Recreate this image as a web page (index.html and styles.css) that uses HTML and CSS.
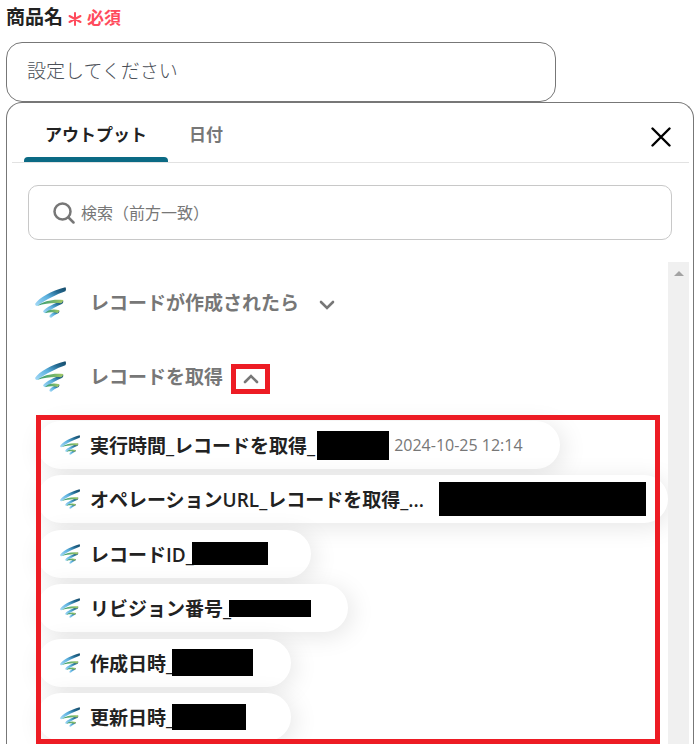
FILE: index.html
```html
<!DOCTYPE html>
<html lang="ja">
<head>
  <meta charset="UTF-8">
  <meta name="viewport" content="width=device-width, initial-scale=1.0">
  <title>商品名</title>
  <link rel="stylesheet" href="styles.css">
</head>
<body>
  <svg class="sprite" width="0" height="0" aria-hidden="true">
    <defs>
      <linearGradient id="blade" x1="0" y1="1" x2="1" y2="0">
        <stop offset="0" stop-color="#a8dcf8"></stop>
        <stop offset="0.45" stop-color="#5bb0de"></stop>
        <stop offset="0.75" stop-color="#22688f"></stop>
        <stop offset="1" stop-color="#174a68"></stop>
      </linearGradient>
      <linearGradient id="leaf" x1="0" y1="0" x2="1" y2="0">
        <stop offset="0" stop-color="#2f9a76"></stop>
        <stop offset="0.6" stop-color="#6fb36a"></stop>
        <stop offset="1" stop-color="#a5c969"></stop>
      </linearGradient>
    </defs>
    <symbol id="logo" viewBox="0 0 93 93">
      <path fill="url(#blade)" d="M24 73C34 60 58 50 84 40Q87 45 82 50C64 58 48 67 33 78Q26 80 24 73Z"></path>
      <path fill="url(#blade)" d="M43 87C48 79 60 73 72 70Q75 74 71 78C63 81 56 87 49 92Q43 93 43 87Z"></path>
      <path fill="url(#blade)" d="M0 51C12 33 48 12 91 1Q95 6 91 13C66 22 34 37 9 56Q2 59 0 51Z"></path>
      <path fill="url(#leaf)" d="M8 56C24 42 56 35 85 39Q84 45 79 49C56 46 30 50 8 56Z"></path>
      <path fill="url(#leaf)" d="M30 78C40 67 58 65 73 70Q72 75 68 78C56 75 44 75 30 78Z"></path>
    </symbol>
  </svg>

  <div class="field">
    <label class="field-label" for="product-name">商品名
      <svg class="required-mark" viewBox="0 0 14 14" aria-hidden="true"><path d="M7 1V13M1.5 4L12.5 10M12.5 4L1.5 10"></path></svg>
      <span class="required">必須</span>
    </label>
    <input class="field-input" id="product-name" type="text" placeholder="設定してください">
  </div>

  <div class="picker">
    <div class="tabs">
      <button class="tab active" type="button">アウトプット</button>
      <button class="tab" type="button">日付</button>
      <button class="close" type="button" aria-label="閉じる">
        <svg viewBox="0 0 20 20"><path d="M1.5 1.5L18.5 18.5M18.5 1.5L1.5 18.5"></path></svg>
      </button>
    </div>

    <div class="search">
      <svg viewBox="0 0 22 22" aria-hidden="true"><circle cx="9.5" cy="9.5" r="8"></circle><path d="M15.5 15.5L20.5 20.5"></path></svg>
      <input type="search" aria-label="検索" placeholder="検索（前方一致）">
    </div>

    <div class="results">
      <div class="groups">
        <button class="group" type="button">
          <svg class="group-logo"><use href="#logo"></use></svg>
          <span>レコードが作成されたら</span>
          <span class="toggle"><svg class="chevron" viewBox="0 0 16 10"><path d="M2 2L8 8L14 2"></path></svg></span>
        </button>
        <button class="group open" type="button">
          <svg class="group-logo"><use href="#logo"></use></svg>
          <span>レコードを取得</span>
          <span class="toggle marked"><svg class="chevron" viewBox="0 0 16 10"><path d="M2 8L8 2L14 8"></path></svg></span>
        </button>

        <div class="outputs">
          <button class="pill" type="button">
            <svg class="pill-logo"><use href="#logo"></use></svg>
            <span>実行時間_レコードを取得_</span>
            <span class="mask mask-time"></span>
            <span class="value">2024-10-25 12:14</span>
          </button>
          <button class="pill pill-wide" type="button">
            <svg class="pill-logo"><use href="#logo"></use></svg>
            <span class="name">オペレーションURL_レコードを取得_...</span>
            <span class="mask mask-url"></span>
          </button>
          <button class="pill" type="button">
            <svg class="pill-logo"><use href="#logo"></use></svg>
            <span>レコードID_</span>
            <span class="slot"><span class="mask mask-id"></span></span>
          </button>
          <button class="pill" type="button">
            <svg class="pill-logo"><use href="#logo"></use></svg>
            <span>リビジョン番号_</span>
            <span class="slot"><span class="mask mask-revision"></span></span>
          </button>
          <button class="pill" type="button">
            <svg class="pill-logo"><use href="#logo"></use></svg>
            <span>作成日時_</span>
            <span class="slot"><span class="mask mask-created"></span></span>
          </button>
          <button class="pill" type="button">
            <svg class="pill-logo"><use href="#logo"></use></svg>
            <span>更新日時_</span>
            <span class="slot"><span class="mask mask-updated"></span></span>
          </button>
          <div class="frame"></div>
        </div>
      </div>
      <div class="scrollbar"></div>
    </div>
  </div>
</body>
</html>
```

FILE: styles.css
```css
* {
  box-sizing: border-box;
}
body {
  display: flex;
  flex-direction: column;
  min-height: 100vh;
  margin: 0;
  padding: 4px 6px 0;
  background: #fff;
  color: #222;
  font-family: "Open Sans", "Noto Sans CJK JP", sans-serif;
  font-size: 19px;
}
button, input {
  font: inherit;
  color: inherit;
}
button {
  padding: 0;
  border: none;
  background: none;
  cursor: pointer;
}
svg {
  flex: none;
  fill: none;
  stroke-linecap: round;
}
.sprite {
  position: absolute;
}

/* Field */
.field-label {
  display: flex;
  align-items: center;
  gap: 5px;
  height: 24px;
  margin-bottom: 14px;
  font-weight: 700;
}
.required-mark {
  width: 14px;
  height: 14px;
  margin-top: 6px;
  stroke: #ff4b5c;
  stroke-width: 2;
}
.required {
  color: #ff4b5c;
  font-size: 17px;
}
.field-input {
  display: block;
  width: 80%;
  height: 60px;
  padding: 0 20px 2px;
  border: 1px solid #777;
  border-radius: 16px;
}
.field-input::placeholder {
  color: #4b5058;
  font-weight: 300;
  opacity: 1;
}

/* Picker */
.picker {
  display: flex;
  flex: 1;
  flex-direction: column;
  padding: 0 4px 0 5px;
  border: 1px solid #777;
  border-bottom: none;
  border-radius: 16px 16px 0 0;
}
.tabs {
  display: flex;
  height: 60px;
  padding: 0 18px 0 12px;
  border-bottom: 1px solid #e2e2e2;
}
.tab {
  position: relative;
  padding: 2px 21px 0;
  color: #777;
  font-size: 17px;
  font-weight: 700;
}
.tab.active {
  color: #222;
}
.tab.active::after {
  content: "";
  position: absolute;
  right: 0;
  bottom: 0;
  left: 0;
  height: 5px;
  border-radius: 4px 4px 0 0;
  background: #0b6a84;
}
.close {
  display: flex;
  align-items: center;
  margin-left: auto;
  padding-top: 8px;
}
.close svg {
  width: 20px;
  height: 20px;
  stroke: #000;
  stroke-width: 2.4;
}
.search {
  display: flex;
  align-items: center;
  gap: 6px;
  height: 55px;
  margin: 22px 17px 22px 16px;
  padding: 0 24px;
  border: 1px solid #c8c8c8;
  border-radius: 10px;
}
.search svg {
  width: 22px;
  height: 22px;
  stroke: #777;
  stroke-width: 2.5;
}
.search input {
  flex: 1;
  min-width: 0;
  padding: 0;
  border: none;
  outline: none;
  font-size: 16px;
}
.search input::placeholder {
  color: #777;
  opacity: 1;
}

/* Results */
.results {
  display: flex;
  flex: 1;
}
.groups {
  display: flex;
  flex: 1;
  flex-direction: column;
  min-width: 0;
  padding: 3px 0 0 25px;
}
.scrollbar {
  position: relative;
  width: 21px;
  padding-top: 9px;
  background: #f0f0f0;
}
.scrollbar::before {
  content: "";
  display: block;
  width: 0;
  margin: 0 auto;
  border: 5px solid transparent;
  border-top: none;
  border-bottom-color: #a3a3a3;
}
.group {
  display: flex;
  align-items: center;
  align-self: flex-start;
  height: 74px;
  color: #777;
  font-weight: 700;
}
.group-logo {
  width: 31px;
  height: 31px;
  margin: 0 24px 0 -2px;
}
.toggle {
  display: flex;
  align-items: center;
  justify-content: center;
  width: 39px;
  height: 30px;
  margin: 5px 0 0 8px;
}
.toggle.marked {
  border: 5px solid #ed1c24;
}
.chevron {
  width: 16px;
  height: 10px;
  stroke: #777;
  stroke-width: 2.6;
}

/* Outputs */
.outputs {
  position: relative;
  display: flex;
  flex: 1;
  flex-direction: column;
  align-items: flex-start;
  justify-content: space-between;
  margin-top: 2px;
  padding: 6px 0 3px;
}
.pill {
  display: flex;
  align-items: center;
  max-width: 100%;
  height: 48px;
  padding: 0 37px 0 23px;
  border-radius: 24px;
  background: #fff;
  box-shadow: 4px 4px 24px rgba(0, 0, 0, 0.1);
  font-weight: 600;
  white-space: nowrap;
}
.pill-wide {
  width: 100%;
  padding-right: 22px;
}
.pill-logo {
  width: 20px;
  height: 20px;
  margin-right: 10px;
}
.name {
  margin-right: auto;
}
.value {
  margin-left: 5px;
  color: #777;
  font-size: 16px;
  font-weight: 400;
}
.slot {
  width: 82px;
  margin-left: -2px;
}
.mask {
  display: block;
  background: #000;
}
.mask-time {
  width: 72px;
  height: 29px;
  margin-left: 2px;
}
.mask-url {
  width: 207px;
  height: 34px;
}
.mask-id {
  width: 76px;
  height: 23px;
}
.mask-revision {
  width: 82px;
  height: 17px;
}
.mask-created {
  width: 81px;
  height: 27px;
}
.mask-updated {
  width: 74px;
  height: 26px;
}
.frame {
  position: absolute;
  top: 0;
  right: 8px;
  bottom: 0;
  left: -1px;
  border: 5px solid #ed1c24;
  pointer-events: none;
}
```
